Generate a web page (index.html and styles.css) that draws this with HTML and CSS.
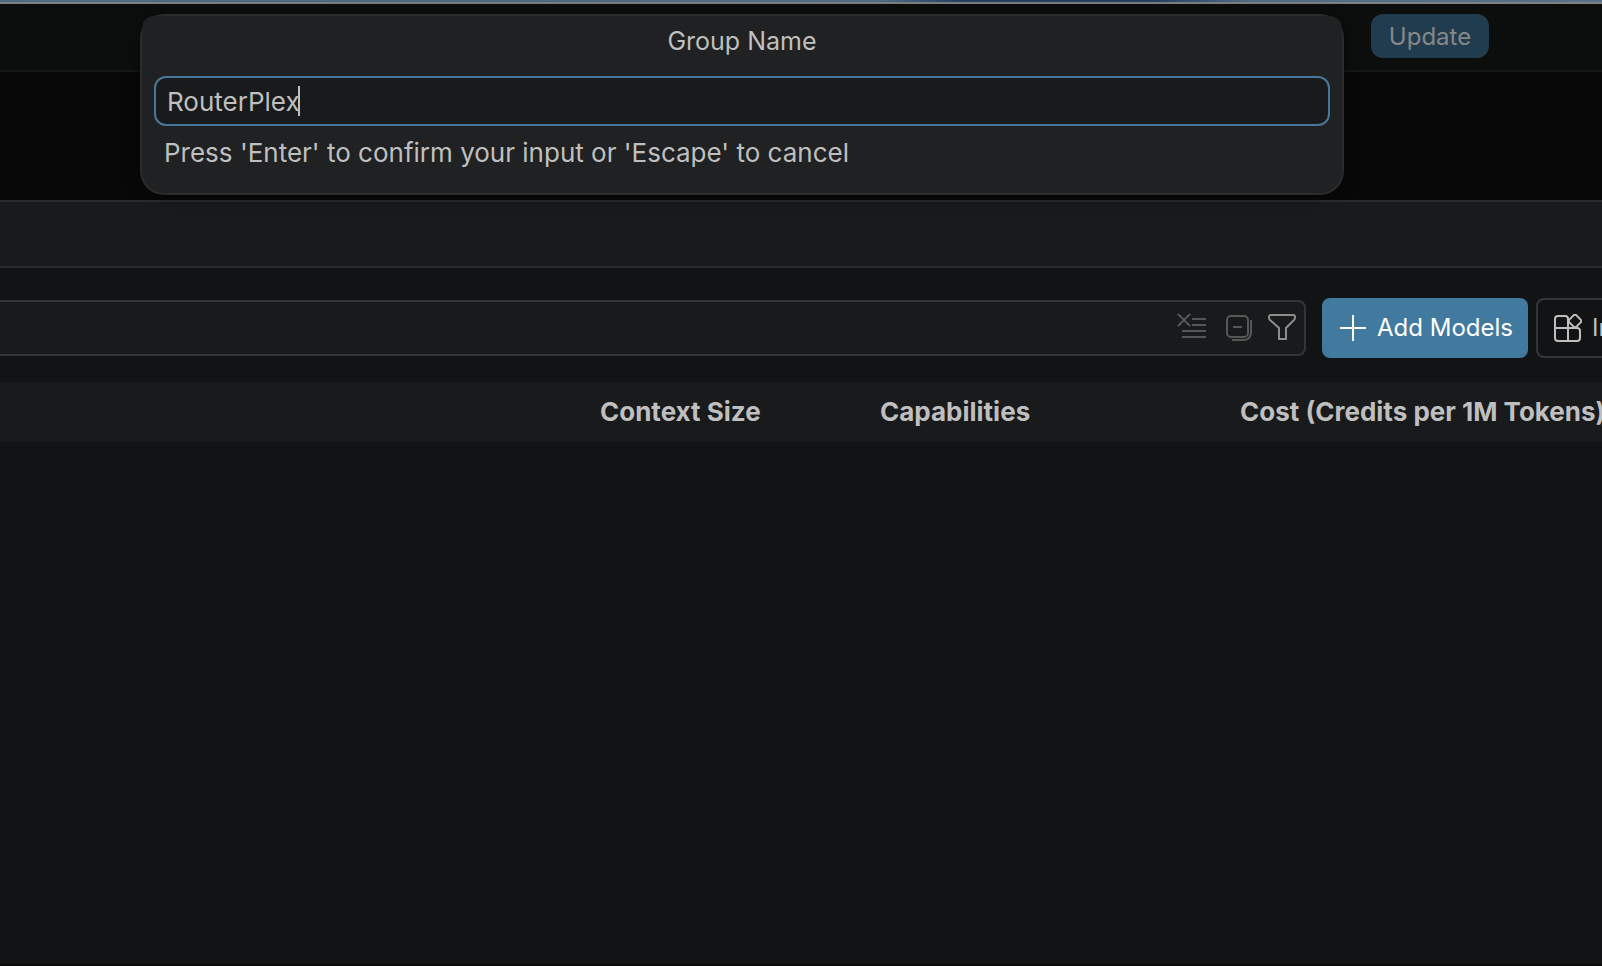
FILE: index.html
```html
<!DOCTYPE html>
<html lang="en">
	<head>
		<meta charset="UTF-8">
		<title>Language Models</title>
		<link rel="stylesheet" href="styles.css">
	</head>
	<body>
		<div class="desktop"></div>
		<header class="titlebar">
			<button class="update" type="button">Update</button>
		</header>
		<div class="tabs"></div>
		<div class="breadcrumbs"></div>
		<main class="editor">
			<div class="models">
				<div class="toolbar">
					<div class="search">
						<input class="search-input" type="text" aria-label="Search models">
						<button class="action" type="button" aria-label="Clear search" disabled>
							<svg viewBox="0 0 32 32"><path d="M2 3l12 12M14 3L2 15M16 8h14M16 14h14M6 20h24M6 26h24"/></svg>
						</button>
						<button class="action" type="button" aria-label="Collapse all" disabled>
							<svg viewBox="0 0 32 32"><rect x="6" y="5" width="21" height="21" rx="4"/><path d="M12 16h9M30 9v13a7 7 0 0 1-7 7H11"/></svg>
						</button>
						<button class="action" type="button" aria-label="Filter">
							<svg viewBox="0 0 32 32"><path d="M5 4h22a2 2 0 0 1 2 2v1a4 4 0 0 1-1 2l-8 8v11h-7V17L4 9a4 4 0 0 1-1-2V6a2 2 0 0 1 2-2z"/></svg>
						</button>
					</div>
					<button class="btn primary" type="button">
						<svg viewBox="0 0 28 28"><path d="M14 1v26M1 14h26"/></svg>
						Add Models
					</button>
					<button class="btn install" type="button">
						<svg viewBox="0 0 28 28"><path d="M14 14V5a3 3 0 0 0-3-3H4a3 3 0 0 0-3 3v19a3 3 0 0 0 3 3h19a3 3 0 0 0 3-3v-7a3 3 0 0 0-3-3H1M14 14v13"/><rect x="16" y="2" width="10" height="10" rx="2" transform="rotate(45 21 7)"/></svg>
						Install
					</button>
				</div>
				<table class="list">
					<thead>
						<tr>
							<th class="name"></th>
							<th class="context">Context Size</th>
							<th class="capabilities">Capabilities</th>
							<th class="cost">Cost (Credits per 1M Tokens)</th>
						</tr>
					</thead>
				</table>
			</div>
		</main>

		<!-- quick input -->
		<div class="quick-input">
			<div class="quick-title"><label for="groupName">Group Name</label></div>
			<div class="quick-body">
				<div class="quick-box">
					<input id="groupName" class="quick-field" type="text" value="RouterPlex">
					<span class="caret"></span>
				</div>
				<p class="quick-message">Press 'Enter' to confirm your input or 'Escape' to cancel</p>
			</div>
		</div>
	</body>
</html>
```

FILE: styles.css
```css
*{
	box-sizing: border-box;
	margin: 0;
	padding: 0;
}
body{
	display: flex;
	flex-direction: column;
	min-height: 100vh;
	position: relative;
	overflow: hidden;
	background: #121314;
	color: #bfbfbf;
	font-family: Inter, "Liberation Sans", sans-serif;
	font-size: 26px;
	line-height: 32px;
}
button, input{
	font: inherit;
	color: inherit;
	border: none;
	outline: none;
	background: none;
}
svg{
	display: block;
	fill: none;
	stroke: currentColor;
	stroke-width: 2;
}
.desktop{
	height: 4px;
	background: linear-gradient(90deg, #4f6b80, #536d86 55%, #263f64 60%, #263f64 72%, #536d86 78%, #58708b);
	border-bottom: 2px solid #7f8180;
}
.titlebar{
	display: flex;
	justify-content: flex-end;
	height: 68px;
	padding: 10px 113px 0 0;
	background: #0b0e0d;
	border-bottom: 2px solid #151616;
}
.update{
	width: 118px;
	height: 44px;
	padding-top: 2px;
	border-radius: 12px;
	background: #223c4f;
	color: #858888;
	font-size: 24px;
}
.tabs{
	height: 128px;
	background: #080808;
}
.breadcrumbs{
	height: 68px;
	background: #191a1b;
	border-top: 2px solid #2a2b2c;
	border-bottom: 2px solid #2a2b2c;
}
.editor{
	flex: 1;
	padding-top: 30px;
	overflow: hidden;
	border-bottom: 2px solid #0b0b0c;
}
/* the list is wider than the editor and runs off its right side */
.models{
	margin-right: -114px;
}
.toolbar{
	display: flex;
	align-items: center;
	margin-bottom: 24px;
}
.search{
	display: flex;
	flex: 1;
	align-items: center;
	gap: 13px;
	height: 56px;
	margin-right: 16px;
	padding: 0 6px 2px 0;
	background: #191a1b;
	border: 2px solid #333536;
	border-left: none;
	border-radius: 0 8px 8px 0;
}
.search-input{
	flex: 1;
	height: 100%;
}
.action{
	width: 32px;
	height: 32px;
	color: #8c8c8c;
}
.action:disabled{
	color: #555656;
}
.btn{
	display: flex;
	align-items: center;
	gap: 10px;
	height: 60px;
	border-radius: 8px;
	font-size: 24px;
	white-space: nowrap;
}
.btn svg{
	width: 28px;
	height: 28px;
}
.primary{
	width: 206px;
	margin-right: 8px;
	padding-left: 17px;
	background: #42799e;
	color: #fff;
}
.install{
	width: 180px;
	padding-left: 16px;
	border: 2px solid #333536;
}
.list{
	width: 100%;
	table-layout: fixed;
	border-collapse: collapse;
}
.list th{
	height: 60px;
	background: #191a1b;
	font-weight: 700;
	text-align: left;
	white-space: nowrap;
}
.context{
	width: 280px;
}
.capabilities{
	width: 360px;
}
.cost{
	width: 476px;
}
.quick-input{
	position: absolute;
	top: 14px;
	left: 140px;
	right: 258px;
	background: #202122;
	border: 2px solid #2a2b2c;
	border-radius: 24px;
	box-shadow: 0 0 16px rgba(0, 0, 0, 0.4);
}
.quick-title{
	height: 52px;
	padding-top: 9px;
	background: #202122;
	border-radius: 12px 12px 0 0;
	text-align: center;
	font-size: 25px;
}
.quick-body{
	padding: 8px 12px 24px;
}
.quick-box{
	display: flex;
	align-items: center;
	position: relative;
	height: 50px;
	background: #191a1b;
	border: 2px solid #48779a;
	border-radius: 12px;
}
.quick-field{
	width: 100%;
	padding: 2px 11px 0;
}
.caret{
	position: absolute;
	left: 142px;
	top: 8px;
	width: 2px;
	height: 30px;
	background: #bfbfbf;
}
.quick-message{
	padding: 11px 10px 0;
}
```
